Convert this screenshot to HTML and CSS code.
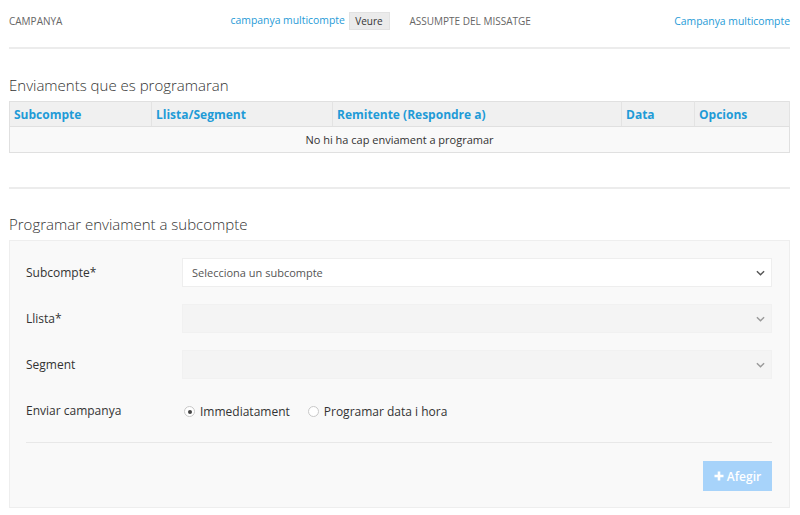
FILE: index.html
```html
<!DOCTYPE html>
<html lang="ca">
<head>
    <meta charset="UTF-8" />
    <meta name="viewport" content="width=device-width, initial-scale=1.0" />
    <title>Campanya multicompte</title>
    <link rel="stylesheet" href="styles.css">
</head>
<body>
    <div class="page">
        <div class="resum">
            <span class="etiqueta">Campanya</span>
            <span class="valor col-2">campanya multicompte <button class="btn-veure">Veure</button></span>
            <span class="etiqueta col-3">Assumpte del missatge</span>
            <span class="valor">Campanya multicompte</span>
        </div>

        <h2>Enviaments que es programaran</h2>
        <table class="taula">
            <colgroup>
                <col style="width:142px">
                <col style="width:181px">
                <col style="width:289px">
                <col style="width:73px">
                <col>
            </colgroup>
            <thead>
                <tr>
                    <th>Subcompte</th>
                    <th>Llista/Segment</th>
                    <th>Remitente (Respondre a)</th>
                    <th>Data</th>
                    <th>Opcions</th>
                </tr>
            </thead>
            <tbody>
                <tr>
                    <td colspan="5">No hi ha cap enviament a programar</td>
                </tr>
            </tbody>
        </table>

        <hr class="separador">

        <h2 class="titol-form">Programar enviament a subcompte</h2>
        <div class="panell">
            <div class="fila">
                <label>Subcompte*</label>
                <div class="select-wrap">
                    <select class="camp">
                        <option>Selecciona un subcompte</option>
                    </select>
                    <svg class="chevron" viewBox="0 0 10 6" width="9" height="6"><path d="M1 1l4 4 4-4" fill="none" stroke="#555" stroke-width="1.6"/></svg>
                </div>
            </div>
            <div class="fila">
                <label>Llista*</label>
                <div class="select-wrap">
                    <select class="camp" disabled></select>
                    <svg class="chevron" viewBox="0 0 10 6" width="9" height="6"><path d="M1 1l4 4 4-4" fill="none" stroke="#999" stroke-width="1.6"/></svg>
                </div>
            </div>
            <div class="fila">
                <label>Segment</label>
                <div class="select-wrap">
                    <select class="camp" disabled></select>
                    <svg class="chevron" viewBox="0 0 10 6" width="9" height="6"><path d="M1 1l4 4 4-4" fill="none" stroke="#999" stroke-width="1.6"/></svg>
                </div>
            </div>
            <div class="fila">
                <label>Enviar campanya</label>
                <div class="radios">
                    <label class="radio"><input type="radio" name="envio" checked> Immediatament</label>
                    <label class="radio"><input type="radio" name="envio"> Programar data i hora</label>
                </div>
            </div>
            <div class="accions">
                <button class="btn-afegir" disabled>
                    <svg viewBox="0 0 10 10" width="10" height="10"><path d="M5 0.5v9M0.5 5h9" stroke="#fff" stroke-width="2.6"/></svg>
                    Afegir
                </button>
            </div>
        </div>
    </div>
</body>
</html>
```

FILE: styles.css
```css
:root {
    --blau: #1f9bd7;
    --gris-linia: #ececec;
    --gris-fons: #f9f9f9;
    --text: #333;
}

body {
    margin: 0;
    font-family: 'Open Sans', 'Liberation Sans', sans-serif;
    color: var(--text);
    background: white;
}

.page {
    padding: 0 10px 0 9px;
}

.resum {
    display: grid;
    grid-template-columns: repeat(4, 1fr);
    align-items: center;
    height: 18px;
    padding: 12px 0 17px;
    border-bottom: 2px solid var(--gris-linia);
    font-size: 10.4px;
}

.etiqueta {
    text-transform: uppercase;
    color: #666;
    font-size: 10px;
}

.valor {
    text-align: right;
    color: var(--blau);
}

.col-2 {
    padding-right: 10px;
}

.col-3 {
    padding-left: 10px;
}

.btn-veure {
    font-family: inherit;
    font-size: 10px;
    color: #333;
    background: #ebebeb;
    border: 1px solid #e2e2e2;
    height: 18px;
    width: 41px;
    padding: 0;
    margin-left: 1px;
    vertical-align: middle;
}

h2 {
    font-size: 15px;
    font-weight: 300;
    line-height: 20px;
    color: #333;
    margin: 26px 0 6px;
}

.taula {
    width: 100%;
    border-collapse: collapse;
    table-layout: fixed;
    border: 1px solid #e0e0e0;
    font-size: 12px;
}

.taula th {
    height: 24px;
    padding: 0 5px 0 4px;
    text-align: left;
    color: var(--blau);
    font-weight: bold;
    background: #f0f0f0;
    border-right: 1px solid #e3e3e3;
    border-bottom: 1px solid #e0e0e0;
}

.taula td {
    height: 25px;
    padding: 0;
    text-align: center;
    font-size: 11px;
    background: var(--gris-fons);
}

.separador {
    border: none;
    border-top: 2px solid var(--gris-linia);
    margin: 34px 0 0;
}

.titol-form {
    margin: 25px 0 6px;
}

.panell {
    background: var(--gris-fons);
    border: 1px solid #eeeeee;
    padding: 17px 17px 16px 16px;
}

.fila {
    display: flex;
    align-items: center;
    height: 29px;
    margin-bottom: 17px;
}

.fila:last-of-type {
    margin-bottom: 0;
}

.fila > label {
    width: 156px;
    font-size: 12px;
}

.select-wrap {
    position: relative;
    flex: 1;
    height: 29px;
}

.camp {
    appearance: none;
    width: 100%;
    height: 29px;
    border: 1px solid #eeeeee;
    background: white;
    font-family: inherit;
    font-size: 11px;
    color: #555;
    padding: 0 9px;
}

.camp:disabled {
    background: #f2f2f2;
}

.chevron {
    position: absolute;
    right: 7px;
    top: 12px;
    pointer-events: none;
}

.radios {
    display: flex;
    gap: 16px;
    font-size: 12px;
    padding-top: 2px;
}

.radio {
    display: flex;
    align-items: center;
    gap: 5px;
}

.radio input {
    appearance: none;
    width: 11px;
    height: 11px;
    margin: 0 0 0 2px;
    border: 1px solid #c8c8c8;
    border-radius: 50%;
    background: white;
    position: relative;
}

.radio input:checked::after {
    content: "";
    position: absolute;
    left: 2.5px;
    top: 2.5px;
    width: 4px;
    height: 4px;
    border-radius: 50%;
    background: #444;
}

.accions {
    margin-top: 16px;
    padding-top: 18px;
    border-top: 1px solid #e8e8e8;
    display: flex;
    justify-content: flex-end;
}

.btn-afegir {
    font-family: inherit;
    font-size: 12px;
    font-weight: 600;
    color: white;
    background: #a7d3fa;
    border: none;
    height: 30px;
    width: 69px;
    display: flex;
    align-items: center;
    justify-content: center;
    gap: 3px;
    padding: 0;
}
```
